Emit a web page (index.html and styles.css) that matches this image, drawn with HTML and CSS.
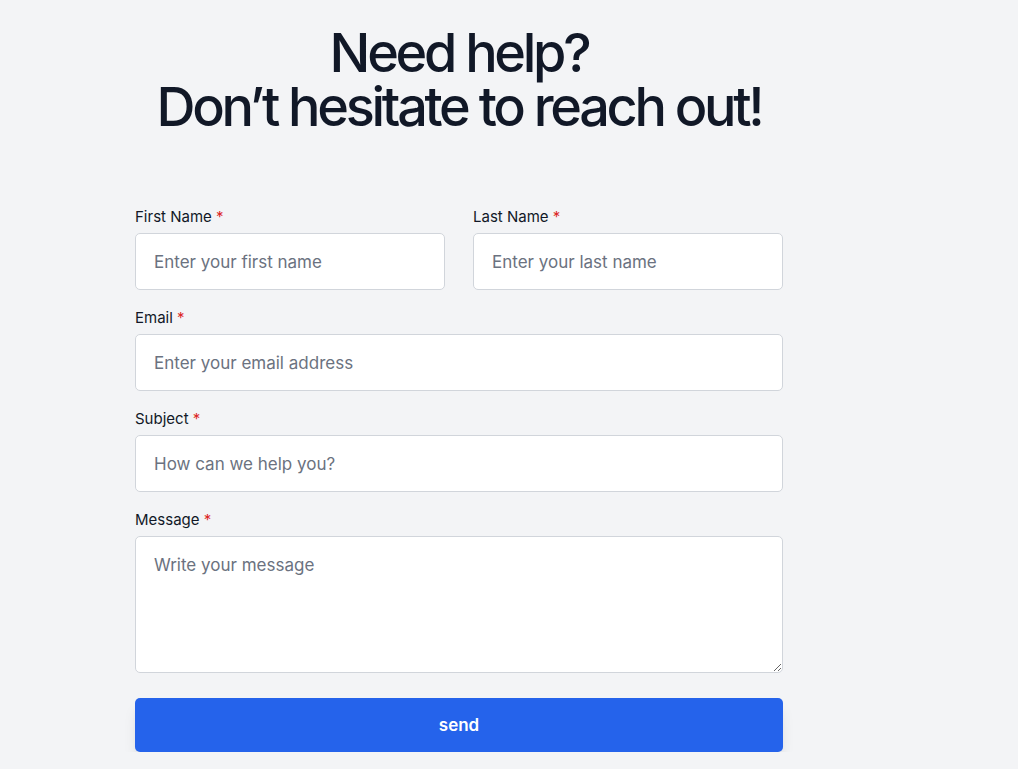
FILE: index.html
```html
<!DOCTYPE html>
<html lang="en">
<head>
<meta charset="utf-8">
<title>Contact</title>
<link rel="stylesheet" href="styles.css">
</head>
<body>
<main class="contact">
  <h1 class="title"><span class="line">Need help?</span><span class="line">Don’t hesitate to reach out!</span></h1>
  <form class="form">
    <div class="row">
      <div class="field">
        <label class="label">First Name <span class="req">*</span></label>
        <input class="input" type="text" placeholder="Enter your first name">
      </div>
      <div class="field">
        <label class="label">Last Name <span class="req">*</span></label>
        <input class="input" type="text" placeholder="Enter your last name">
      </div>
    </div>
    <div class="field">
      <label class="label">Email <span class="req">*</span></label>
      <input class="input" type="email" placeholder="Enter your email address">
    </div>
    <div class="field">
      <label class="label">Subject <span class="req">*</span></label>
      <input class="input" type="text" placeholder="How can we help you?">
    </div>
    <div class="field">
      <label class="label">Message <span class="req">*</span></label>
      <textarea class="input textarea" placeholder="Write your message"></textarea>
    </div>
    <button class="send" type="button">send</button>
  </form>
</main>
</body>
</html>
```
FILE: styles.css
```css
* { box-sizing: border-box; }
html, body { margin: 0; padding: 0; }
body {
  background: #f3f4f6;
  font-family: Inter, "Noto Sans", sans-serif;
  color: #111827;
}
.contact {
  width: 648px;
  margin-left: 135px;
  padding-top: 26px;
}
.title {
  margin: 0;
  text-align: center;
  font-size: 54px;
  line-height: 1;
  font-weight: 450;
  letter-spacing: -0.061em;
  color: #111827;
}
.line {
  display: block;
  white-space: nowrap;
}
.form {
  margin-top: 73px;
  display: flex;
  flex-direction: column;
  gap: 18px;
}
.row {
  display: grid;
  grid-template-columns: 1fr 1fr;
  gap: 28px;
}
.field {
  display: flex;
  flex-direction: column;
  gap: 6px;
}
.label {
  font-size: 15px;
  line-height: 20px;
  font-weight: 400;
  color: #111827;
}
.req { color: #dc2626; }
.input {
  display: block;
  width: 100%;
  height: 57px;
  padding: 0 18px;
  background: #fff;
  border: 1px solid #d1d5db;
  border-radius: 5px;
  font-family: inherit;
  font-size: 17px;
  color: #111827;
  outline: none;
}
.input::placeholder { color: #6b7280; }
.textarea {
  height: 137px;
  padding: 18px 18px;
  resize: vertical;
}
.send {
  margin-top: 7px;
  height: 54px;
  width: 100%;
  border: 0;
  border-radius: 5px;
  background: #2563eb;
  color: #fff;
  font-family: inherit;
  font-size: 17px;
  font-weight: 600;
  box-shadow: 0 10px 15px -3px rgba(0,0,0,0.1), 0 4px 6px -4px rgba(0,0,0,0.1);
  cursor: pointer;
}
```
